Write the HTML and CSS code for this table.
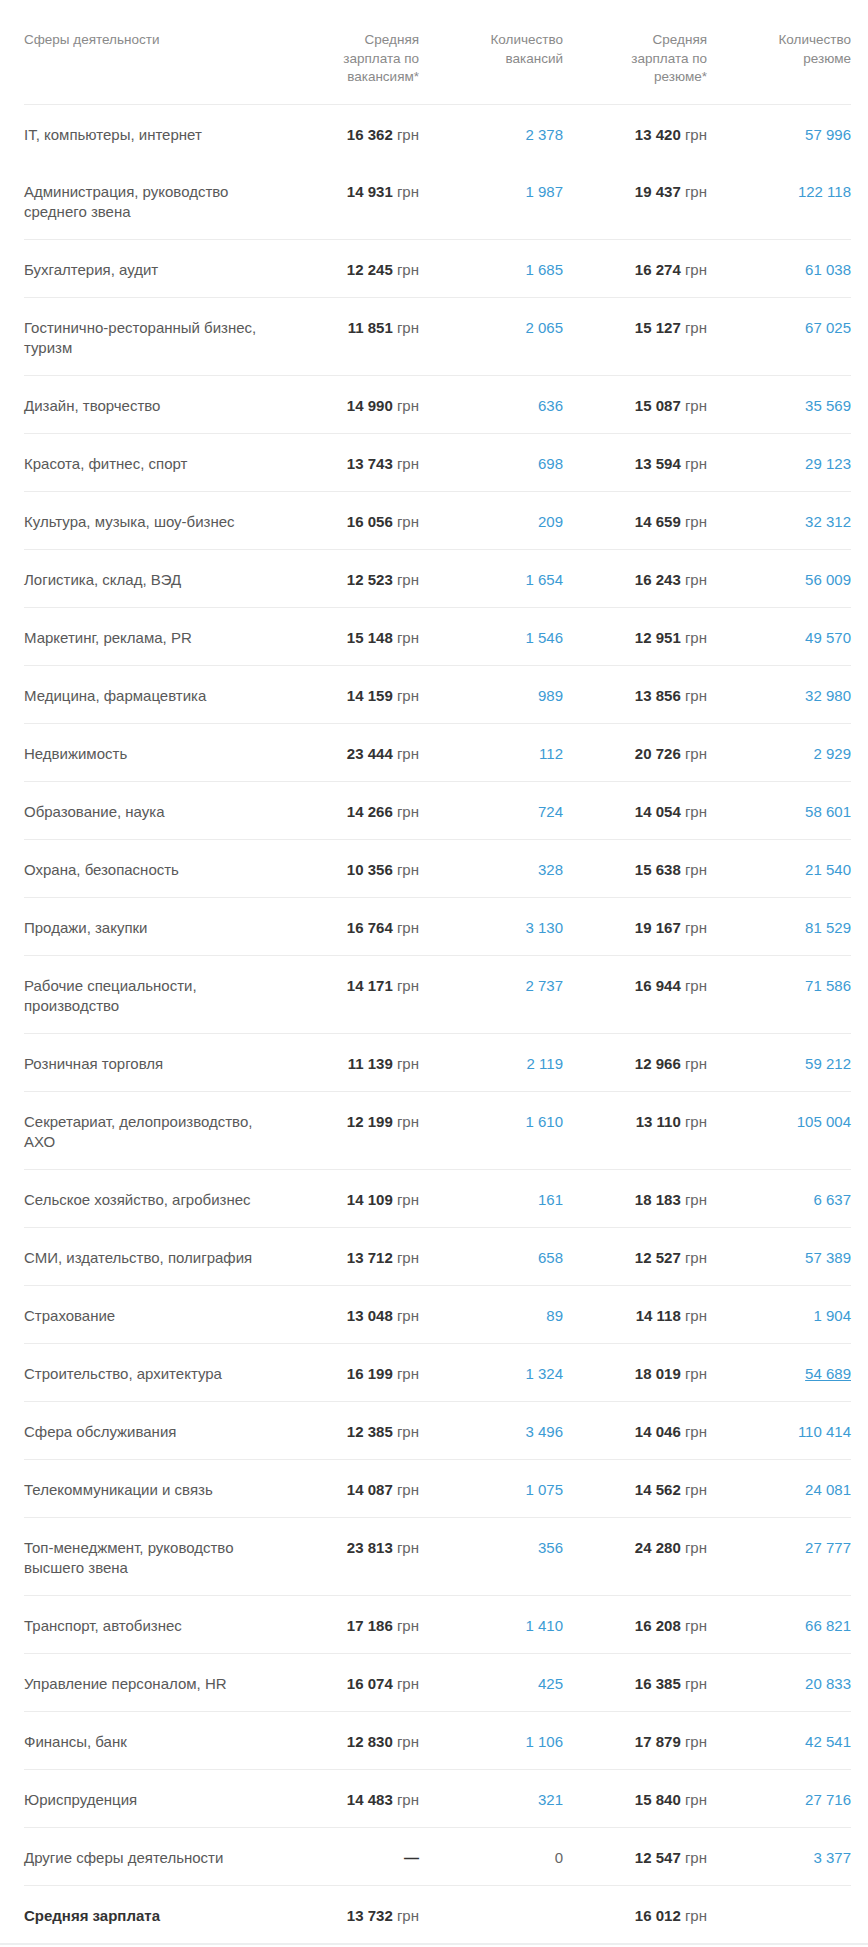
FILE: index.html
```html
<!DOCTYPE html>
<html lang="ru">
<head>
<meta charset="utf-8">
<title>Зарплаты по сферам деятельности</title>
<link rel="stylesheet" href="styles.css">
</head>
<body>
<div class="page">
<table class="salary">
  <colgroup>
    <col class="c-name"><col class="c-num"><col class="c-num"><col class="c-num"><col class="c-num">
  </colgroup>
  <thead>
    <tr>
      <th class="h-name">Сферы деятельности</th>
      <th><span class="hw">Средняя зарплата по вакансиям*</span></th>
      <th><span class="hw">Количество вакансий</span></th>
      <th><span class="hw">Средняя зарплата по резюме*</span></th>
      <th><span class="hw">Количество резюме</span></th>
    </tr>
  </thead>
  <tbody>
    <tr><td class="name">IT, компьютеры, интернет</td><td><b>16 362</b> грн</td><td><a>2 378</a></td><td><b>13 420</b> грн</td><td><a>57 996</a></td></tr>
    <tr class="noline"><td class="name">Администрация, руководство среднего звена</td><td><b>14 931</b> грн</td><td><a>1 987</a></td><td><b>19 437</b> грн</td><td><a>122 118</a></td></tr>
    <tr><td class="name">Бухгалтерия, аудит</td><td><b>12 245</b> грн</td><td><a>1 685</a></td><td><b>16 274</b> грн</td><td><a>61 038</a></td></tr>
    <tr><td class="name">Гостинично-ресторанный бизнес, туризм</td><td><b>11 851</b> грн</td><td><a>2 065</a></td><td><b>15 127</b> грн</td><td><a>67 025</a></td></tr>
    <tr><td class="name">Дизайн, творчество</td><td><b>14 990</b> грн</td><td><a>636</a></td><td><b>15 087</b> грн</td><td><a>35 569</a></td></tr>
    <tr><td class="name">Красота, фитнес, спорт</td><td><b>13 743</b> грн</td><td><a>698</a></td><td><b>13 594</b> грн</td><td><a>29 123</a></td></tr>
    <tr><td class="name">Культура, музыка, шоу-бизнес</td><td><b>16 056</b> грн</td><td><a>209</a></td><td><b>14 659</b> грн</td><td><a>32 312</a></td></tr>
    <tr><td class="name">Логистика, склад, ВЭД</td><td><b>12 523</b> грн</td><td><a>1 654</a></td><td><b>16 243</b> грн</td><td><a>56 009</a></td></tr>
    <tr><td class="name">Маркетинг, реклама, PR</td><td><b>15 148</b> грн</td><td><a>1 546</a></td><td><b>12 951</b> грн</td><td><a>49 570</a></td></tr>
    <tr><td class="name">Медицина, фармацевтика</td><td><b>14 159</b> грн</td><td><a>989</a></td><td><b>13 856</b> грн</td><td><a>32 980</a></td></tr>
    <tr><td class="name">Недвижимость</td><td><b>23 444</b> грн</td><td><a>112</a></td><td><b>20 726</b> грн</td><td><a>2 929</a></td></tr>
    <tr><td class="name">Образование, наука</td><td><b>14 266</b> грн</td><td><a>724</a></td><td><b>14 054</b> грн</td><td><a>58 601</a></td></tr>
    <tr><td class="name">Охрана, безопасность</td><td><b>10 356</b> грн</td><td><a>328</a></td><td><b>15 638</b> грн</td><td><a>21 540</a></td></tr>
    <tr><td class="name">Продажи, закупки</td><td><b>16 764</b> грн</td><td><a>3 130</a></td><td><b>19 167</b> грн</td><td><a>81 529</a></td></tr>
    <tr><td class="name">Рабочие специальности, производство</td><td><b>14 171</b> грн</td><td><a>2 737</a></td><td><b>16 944</b> грн</td><td><a>71 586</a></td></tr>
    <tr><td class="name">Розничная торговля</td><td><b>11 139</b> грн</td><td><a>2 119</a></td><td><b>12 966</b> грн</td><td><a>59 212</a></td></tr>
    <tr><td class="name">Секретариат, делопроизводство, АХО</td><td><b>12 199</b> грн</td><td><a>1 610</a></td><td><b>13 110</b> грн</td><td><a>105 004</a></td></tr>
    <tr><td class="name">Сельское хозяйство, агробизнес</td><td><b>14 109</b> грн</td><td><a>161</a></td><td><b>18 183</b> грн</td><td><a>6 637</a></td></tr>
    <tr><td class="name">СМИ, издательство, полиграфия</td><td><b>13 712</b> грн</td><td><a>658</a></td><td><b>12 527</b> грн</td><td><a>57 389</a></td></tr>
    <tr><td class="name">Страхование</td><td><b>13 048</b> грн</td><td><a>89</a></td><td><b>14 118</b> грн</td><td><a>1 904</a></td></tr>
    <tr><td class="name">Строительство, архитектура</td><td><b>16 199</b> грн</td><td><a>1 324</a></td><td><b>18 019</b> грн</td><td><a class="hover">54 689</a></td></tr>
    <tr><td class="name">Сфера обслуживания</td><td><b>12 385</b> грн</td><td><a>3 496</a></td><td><b>14 046</b> грн</td><td><a>110 414</a></td></tr>
    <tr><td class="name">Телекоммуникации и связь</td><td><b>14 087</b> грн</td><td><a>1 075</a></td><td><b>14 562</b> грн</td><td><a>24 081</a></td></tr>
    <tr><td class="name">Топ-менеджмент, руководство высшего звена</td><td><b>23 813</b> грн</td><td><a>356</a></td><td><b>24 280</b> грн</td><td><a>27 777</a></td></tr>
    <tr><td class="name">Транспорт, автобизнес</td><td><b>17 186</b> грн</td><td><a>1 410</a></td><td><b>16 208</b> грн</td><td><a>66 821</a></td></tr>
    <tr><td class="name">Управление персоналом, HR</td><td><b>16 074</b> грн</td><td><a>425</a></td><td><b>16 385</b> грн</td><td><a>20 833</a></td></tr>
    <tr><td class="name">Финансы, банк</td><td><b>12 830</b> грн</td><td><a>1 106</a></td><td><b>17 879</b> грн</td><td><a>42 541</a></td></tr>
    <tr><td class="name">Юриспруденция</td><td><b>14 483</b> грн</td><td><a>321</a></td><td><b>15 840</b> грн</td><td><a>27 716</a></td></tr>
    <tr><td class="name">Другие сферы деятельности</td><td><b>—</b></td><td class="zero">0</td><td><b>12 547</b> грн</td><td><a>3 377</a></td></tr>
  </tbody>
  <tfoot>
    <tr><td class="name total">Средняя зарплата</td><td><b>13 732</b> грн</td><td></td><td><b>16 012</b> грн</td><td></td></tr>
  </tfoot>
</table>
</div>
<div class="bottom-bar"></div>
</body>
</html>
```

FILE: styles.css
```css
html, body {
  margin: 0;
  padding: 0;
  background: #ffffff;
}

body {
  font-family: "Liberation Sans", Arial, sans-serif;
  color: #595959;
}

.page {
  padding: 0 17px 0 24px;
}

.salary {
  width: 827px;
  border-collapse: collapse;
  table-layout: fixed;
}

.c-name { width: 251px; }
.c-num { width: 144px; }

.salary th {
  font-weight: normal;
  font-size: 13.5px;
  line-height: 18.5px;
  color: #8a8a8a;
  text-align: right;
  vertical-align: top;
  padding: 31px 0 17px 0;
  border-bottom: 1px solid #ececec;
}

.salary th.h-name {
  text-align: left;
}

.hw {
  display: inline-block;
  max-width: 88px;
}

.salary td {
  font-size: 15px;
  line-height: 20px;
  text-align: right;
  vertical-align: top;
  padding: 20px 0 17px 0;
  color: #666666;
  white-space: nowrap;
}

.salary tbody tr + tr td {
  border-top: 1px solid #ececec;
}

.salary tbody tr.noline td {
  border-top: none;
}

.salary td.name {
  text-align: left;
  white-space: normal;
  padding-right: 12px;
  color: #595959;
}

.salary td b {
  color: #333333;
  font-weight: bold;
}

.salary td a {
  color: #3c9bd4;
  text-decoration: none;
}

.salary td a.hover {
  text-decoration: underline;
}

.salary td.zero {
  color: #666666;
}

.salary tfoot td {
  border-top: 1px solid #ececec;
  padding: 20px 0 17px 0;
}

.salary td.total {
  font-weight: bold;
  color: #333333;
}

.bottom-bar {
  height: 2px;
  background: #eceeef;
}
```
